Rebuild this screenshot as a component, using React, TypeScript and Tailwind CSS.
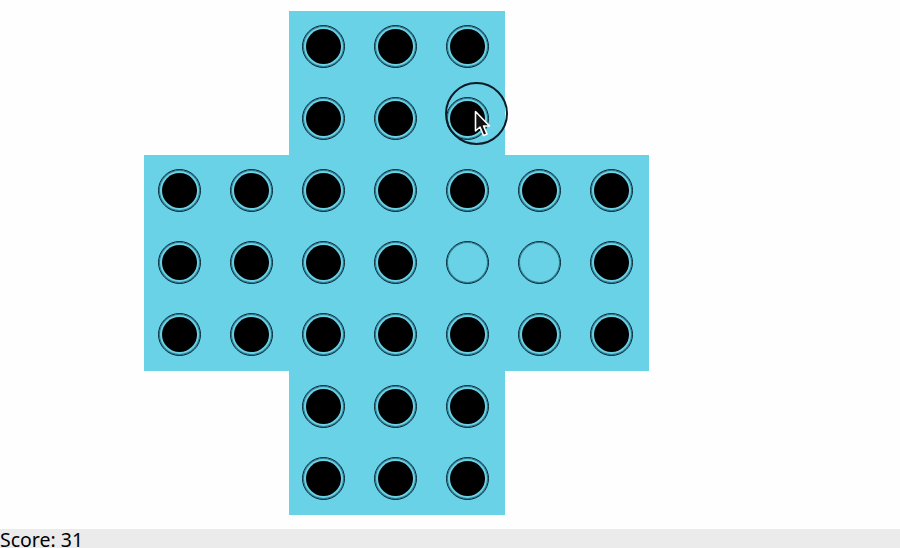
const LAYOUT = [
  '  ooo  ',
  '  ooo  ',
  'ooooooo',
  'oooo..o',
  'ooooooo',
  '  ooo  ',
  '  ooo  ',
];

function Hole({ filled }: { filled: boolean }) {
  return (
    <div className="flex h-[43px] w-[43px] items-center justify-center rounded-full border border-[#04202e] shadow-[inset_0_0_0_1px_#2f7d92]">
      {filled && <div className="h-[35px] w-[35px] rounded-full bg-black" />}
    </div>
  );
}

function Cursor() {
  return (
    <svg width="18" height="28" viewBox="0 0 18 28" className="absolute left-[27px] top-[26px]">
      <path
        d="M1.5 1.5 L1.5 21 L6 17 L9.5 25.5 L13 24 L9.5 16 L15.5 16 Z"
        fill="#111"
        stroke="#fff"
        strokeWidth="1.6"
        strokeLinejoin="round"
      />
    </svg>
  );
}

// the arms of the cross sit a pixel off the 72px grid in the reference
function cellClass(r: number, c: number) {
  const inArm = r < 2 || r > 4;
  if (inArm && c === 2) return 'ml-px pr-[2px]';
  if ((inArm && c === 4) || c === 6) return '-mr-px pr-[2px]';
  return 'pr-px';
}

export default function App() {
  return (
    <div className="flex h-[548px] w-[900px] flex-col overflow-hidden bg-[#fefefe]">
      <div className="flex-1 pl-[144px] pt-[11px]">
        <div className="relative grid w-[504px] grid-cols-[repeat(7,72px)] grid-rows-[repeat(7,72px)]">
          {LAYOUT.flatMap((row, r) =>
            row.split('').map((c, i) =>
              c === ' ' ? (
                <div key={`${r}-${i}`} />
              ) : (
                <div
                  key={`${r}-${i}`}
                  className={`flex items-center justify-center bg-[#6ad2e7] pb-px ${cellClass(r, i)}`}
                >
                  <Hole filled={c === 'o'} />
                </div>
              )
            )
          )}
          {/* click highlight and pointer */}
          <div className="absolute left-[301px] top-[71px] h-[63px] w-[63px] rounded-full border-2 border-[#0b1a24]">
            <Cursor />
          </div>
        </div>
      </div>
      <div className="h-[19px] bg-[#ebebeb] font-['Noto_Sans',sans-serif] text-[19.5px] leading-[21px] text-black">
        Score: 31
      </div>
    </div>
  );
}
